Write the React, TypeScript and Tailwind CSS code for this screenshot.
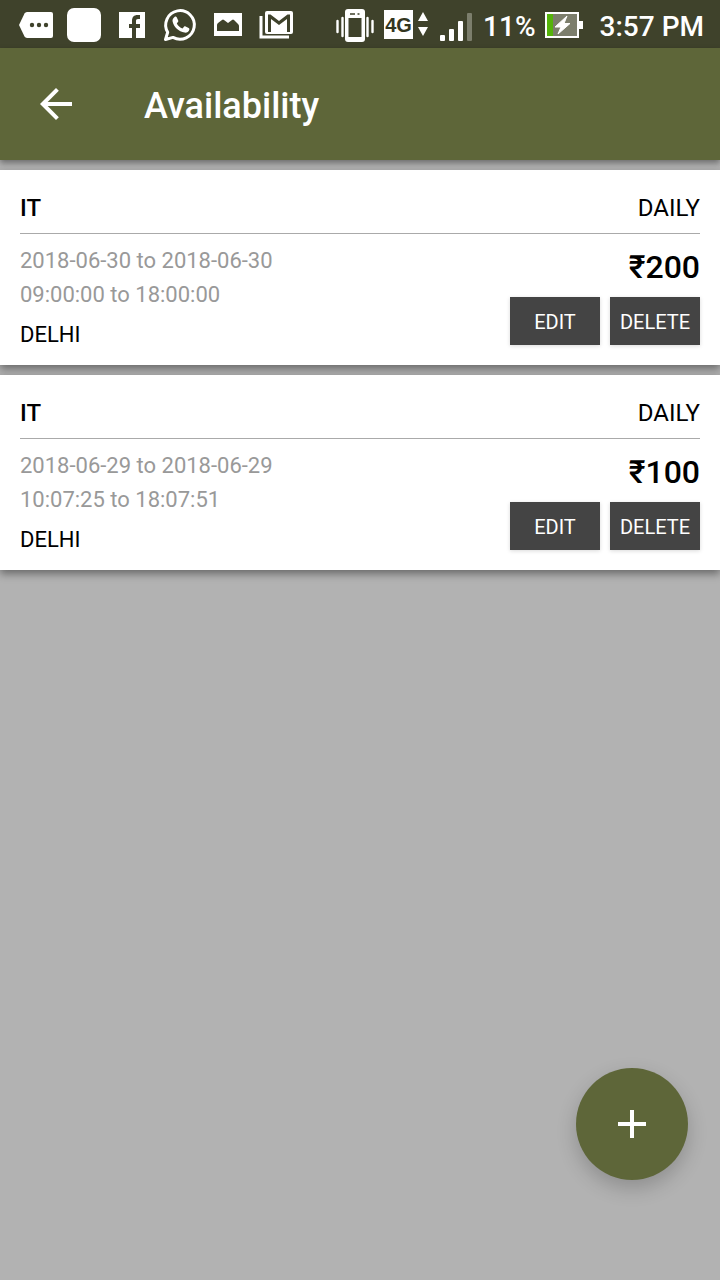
import React from "react";

type Slot = {
  id: number;
  title: string;
  period: string;
  dates: string;
  hours: string;
  city: string;
  price: string;
};

const slots: Slot[] = [
  {
    id: 1,
    title: "IT",
    period: "DAILY",
    dates: "2018-06-30 to 2018-06-30",
    hours: "09:00:00 to 18:00:00",
    city: "DELHI",
    price: "₹200",
  },
  {
    id: 2,
    title: "IT",
    period: "DAILY",
    dates: "2018-06-29 to 2018-06-29",
    hours: "10:07:25 to 18:07:51",
    city: "DELHI",
    price: "₹100",
  },
];

function NotificationIcons() {
  const cell = "h-12 w-12 shrink-0";
  return (
    <div className="flex items-center" aria-hidden="true">
      <svg className={cell} viewBox="0 0 48 48">
        <path
          d="M15 12H39a2 2 0 0 1 2 2v22a2 2 0 0 1-2 2H15a3 3 0 0 1-2.500-1.500L7 25l5.500-11.500A3 3 0 0 1 15 12z"
          fill="#fff"
        />
        <circle cx="20" cy="25" r="2.200" fill="#3f422b" />
        <circle cx="27" cy="25" r="2.200" fill="#3f422b" />
        <circle cx="34" cy="25" r="2.200" fill="#3f422b" />
      </svg>
      <svg className={cell} viewBox="0 0 48 48">
        <rect x="7" y="8" width="34" height="34" rx="7" fill="#fff" />
      </svg>
      <svg className={cell} viewBox="0 0 48 48">
        <rect x="11" y="12" width="26" height="26" fill="#fff" />
        <path
          d="M24 38V28h-3v-4h3v-3c0-4 2-6 5.500-6H32v4h-2c-1.500 0-2 .7-2 2v3h4v4h-4v10z"
          fill="#3f422b"
        />
      </svg>
      <svg className={cell} viewBox="0 0 48 48">
        <path
          d="M9.500 39.500l2.200-7.300A14.300 14.300 0 1 1 17 37.400z"
          fill="none"
          stroke="#fff"
          strokeWidth="3"
          strokeLinejoin="round"
        />
        <path
          d="M18.500 17c.7-.6 1.700-.6 2.200.2l1.500 3.200c.3.600.1 1.200-.3 1.700l-1.100 1.300c1.300 2.400 3.200 4.100 5.700 5.100l1.500-1.700c.4-.5 1-.6 1.600-.3l3 1.500c.7.400.9.900.7 1.700-.6 2.100-2.600 3.200-4.700 2.900-6-.9-10.800-5.400-12-11-.4-1.900.5-3.500 1.900-4.600z"
          fill="#fff"
        />
      </svg>
      <svg className={cell} viewBox="0 0 48 48">
        <rect x="10" y="13" width="28" height="23" fill="#fff" />
        <path
          d="M13 31v-6q0-1 1-2l4-3q1-1 2 0l4 3 4-3q1-1 2 0l4 4q1 1 1 2v5z"
          fill="#3f422b"
        />
      </svg>
      <svg className={cell} viewBox="0 0 48 48">
        <path d="M9 16v21h28" fill="none" stroke="#fff" strokeWidth="3" />
        <rect x="13" y="11" width="28" height="23" rx="2" fill="#fff" />
        <path
          d="M16 32V14.500h2.500L27 21l8.500-6.500H38V32h-3V19l-8 6-8-6v13z"
          fill="#3f422b"
        />
      </svg>
    </div>
  );
}

function StatusBar() {
  return (
    <div className="flex h-12 items-center justify-between bg-[#3f422b] pr-4 pl-3 text-white">
      <NotificationIcons />
      <div className="flex h-12 items-center">
        <svg className="h-12 w-10 shrink-0" viewBox="0 0 40 48" aria-hidden="true">
          <path
            d="M1.500 21v11M6.500 18v18M31.500 18v18M36.500 21v11"
            stroke="#fff"
            strokeWidth="2.400"
            strokeLinecap="round"
          />
          <rect x="9" y="9" width="20" height="33" rx="3" fill="#fff" />
          <rect x="12.500" y="18" width="13" height="19" fill="#3f422b" />
          <path d="M14 14h5M21.500 14h2" stroke="#3f422b" strokeWidth="1.600" />
        </svg>
        <span className="ml-2 flex h-[29px] w-[29px] items-center justify-center bg-white pt-0.5 font-['Liberation_Sans',sans-serif] text-xl font-bold text-[#33361f]">
          4G
        </span>
        <svg className="ml-1 h-12 w-3 shrink-0" viewBox="0 0 12 48" aria-hidden="true">
          <path d="M6 12l5 9H1zM1 27h10l-5 9z" fill="#fff" />
        </svg>
        <svg className="ml-[11px] h-12 w-8 shrink-0" viewBox="0 0 32 48" aria-hidden="true">
          <rect x="0" y="35" width="5" height="6" rx="1" fill="#fff" />
          <rect x="9" y="29" width="5" height="12" rx="1" fill="#fff" />
          <rect x="18" y="21" width="5" height="20" rx="1" fill="#fff" />
          <rect x="27" y="13" width="5" height="28" rx="1" fill="#7c7e6c" />
        </svg>
        <span className="ml-[11px] pt-1.5 text-[28px] leading-8 font-medium">11%</span>
        <svg className="ml-2 h-12 w-10 shrink-0" viewBox="0 0 40 48" aria-hidden="true">
          <rect x="1" y="12" width="34" height="26" fill="#fff" />
          <rect x="3" y="14" width="30" height="22" fill="#7c7e6c" />
          <rect x="3" y="14" width="6" height="22" fill="#55b30b" />
          <rect x="35" y="21" width="4" height="8" fill="#fff" />
          <path
            d="M23 16L11 27h6l-3 7L26 23.500h-6z"
            fill="#fff"
            stroke="#fff"
            strokeWidth="1"
            strokeLinejoin="round"
          />
        </svg>
        <span className="ml-4 pt-1.5 text-[28px] leading-8 font-medium">3:57 PM</span>
      </div>
    </div>
  );
}

function AppBar() {
  return (
    <header className="relative flex h-28 items-center bg-[#5e6639] pl-8 text-white shadow-[0_3px_6px_rgba(0,0,0,0.4)]">
      <button type="button" aria-label="Back" className="h-12 w-12">
        <svg className="h-12 w-12" viewBox="0 0 24 24" fill="#fff" aria-hidden="true">
          <path d="M20 11H7.830l5.590-5.590L12 4l-8 8 8 8 1.410-1.410L7.830 13H20v-2z" />
        </svg>
      </button>
      <h1 className="ml-16 pt-1 text-4xl font-medium">Availability</h1>
    </header>
  );
}

function ActionButton({ children }: { children: React.ReactNode }) {
  return (
    <button
      type="button"
      className="h-12 w-[90px] bg-[#444] pt-0.5 text-xl text-white shadow-[0_1px_4px_rgba(0,0,0,0.15)]"
    >
      {children}
    </button>
  );
}

function SlotCard({ slot }: { slot: Slot }) {
  return (
    <li className="bg-white p-5 shadow-[0_4px_8px_rgba(0,0,0,0.4)]">
      <div className="flex justify-between border-b border-[#aaa] pb-[7px] text-2xl leading-9">
        <h2 className="font-medium">{slot.title}</h2>
        <span>{slot.period}</span>
      </div>
      <div className="flex items-start justify-between pt-2.5">
        <div className="text-[22px] leading-[34px]">
          <p className="text-[#999]">{slot.dates}</p>
          <p className="text-[#999]">{slot.hours}</p>
          <p className="pt-[13px] leading-5">{slot.city}</p>
        </div>
        <div className="flex flex-col items-end gap-1.5">
          <p className="text-[32px] leading-[47px] font-medium">{slot.price}</p>
          <div className="flex gap-2.5">
            <ActionButton>EDIT</ActionButton>
            <ActionButton>DELETE</ActionButton>
          </div>
        </div>
      </div>
    </li>
  );
}

export default function App() {
  return (
    <div className="flex min-h-screen flex-col bg-[#b2b2b2] font-['Roboto',sans-serif] text-black">
      <StatusBar />
      <AppBar />
      <main className="flex-1">
        <ul className="flex flex-col gap-2.5 pt-2.5">
          {slots.map((slot) => (
            <SlotCard key={slot.id} slot={slot} />
          ))}
        </ul>
      </main>
      <button
        type="button"
        aria-label="Add availability"
        className="fixed right-8 bottom-[100px] flex h-28 w-28 items-center justify-center rounded-full bg-[#5e6639] shadow-[0_8px_20px_rgba(0,0,0,0.2)]"
      >
        <svg className="h-12 w-12" viewBox="0 0 24 24" fill="#fff" aria-hidden="true">
          <path d="M19 13h-6v6h-2v-6H5v-2h6V5h2v6h6v2z" />
        </svg>
      </button>
    </div>
  );
}
